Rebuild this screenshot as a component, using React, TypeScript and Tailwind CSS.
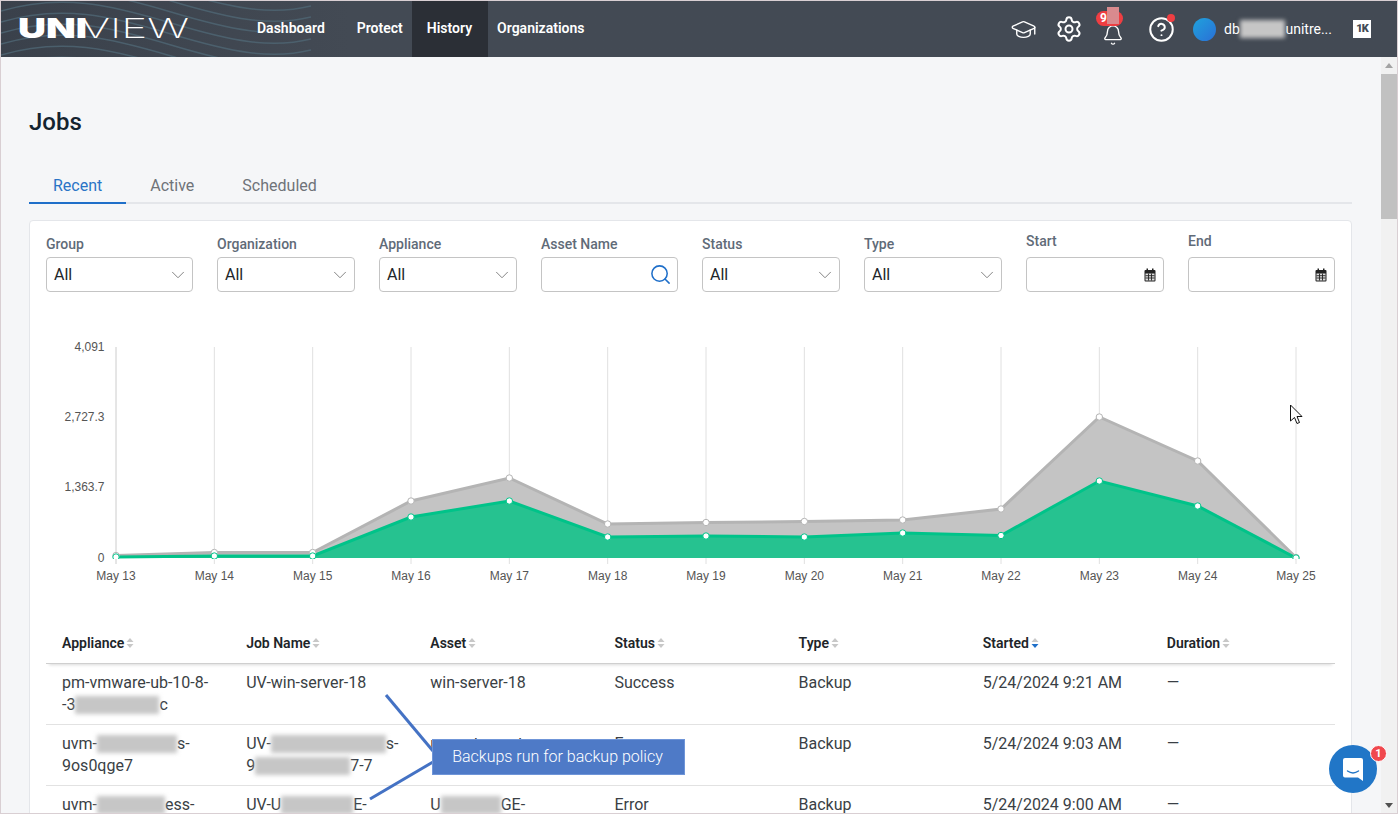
import React from "react";
import { GraduationCap, Settings, Bell, CircleHelp, Search, ChevronDown } from "lucide-react";

const xs = Array.from({ length: 13 }, (_, i) => 116 + (1180 / 12) * i);
const labels = ["May 13","May 14","May 15","May 16","May 17","May 18","May 19","May 20","May 21","May 22","May 23","May 24","May 25"];
const gray = [555.5,552.5,552.5,501,478,524,522.5,521.5,520,509,417,461,557.5];
const green = [557,556,556,517,501,537,536,537,533,535.5,481,506,558];

function pts(a: number[]) { return a.map((y, i) => `${xs[i]},${y}`).join(" "); }
function area(a: number[]) { return `116,558 ${pts(a)} 1296,558`; }

function Chart() {
  return (
    <svg width="1289" height="260" viewBox="46 330 1289 260" className="block">
      <defs>
        <clipPath id="plot"><rect x="100" y="340" width="1210" height="219" /></clipPath>
      </defs>
      {xs.map((x, i) => (
        <line key={x} x1={x} x2={x} y1={347} y2={564} stroke={i === 0 ? "#cccccc" : "#e0e0e0"} strokeWidth="1" />
      ))}
      {[["4,091",347],["2,727.3",417],["1,363.7",487],["0",558]].map(([t, y]) => (
        <text key={t as string} x={104.5} y={(y as number) + 4} textAnchor="end" fontSize="12" fill="#555555" fontFamily="Liberation Sans, sans-serif">{t}</text>
      ))}
      {labels.map((t, i) => (
        <text key={t} x={xs[i]} y={580} textAnchor="middle" fontSize="12" fill="#555555" fontFamily="Liberation Sans, sans-serif">{t}</text>
      ))}
      <polygon points={area(gray)} fill="#c4c4c4" />
      <polyline points={pts(gray)} fill="none" stroke="#b4b4b4" strokeWidth="3" />
      <polygon points={area(green)} fill="#26c290" />
      <polyline points={pts(green)} fill="none" stroke="#00c389" strokeWidth="3" />
      <g clipPath="url(#plot)">
        {gray.map((y, i) => <circle key={i} cx={xs[i]} cy={y} r="3.2" fill="#fff" stroke="#b4b4b4" strokeWidth="1" />)}
        {green.map((y, i) => <circle key={i} cx={xs[i]} cy={y} r="3.2" fill="#fff" stroke="#00c389" strokeWidth="1" />)}
      </g>
    </svg>
  );
}

function Blur({ w }: { w: number }) {
  return <span style={{ width: w }} className="inline-block h-[18px] align-[-4px] bg-[#c6c6c6] blur-[2px]" />;
}

function Sel({ label, w }: { label: string; w: string }) {
  return (
    <div className={w}>
      <div className="text-[14px] leading-[16px] font-medium text-[#5f6b78] mb-[5px]">{label}</div>
      <div className="h-[35px] border border-[#c4c4c4] rounded-[4px] bg-white flex items-center justify-between pl-[7px] pr-[3px]">
        <span className="text-[16px] text-[#212529]">All</span>
        <ChevronDown className="w-[22px] h-[22px] text-[#7a7a7a]" strokeWidth={1} />
      </div>
    </div>
  );
}

function CalIcon() {
  return (
    <svg width="12" height="14" viewBox="0 0 12 14">
      <rect x="2.5" y="0.5" width="1.5" height="3" fill="#222" />
      <rect x="8" y="0.5" width="1.5" height="3" fill="#222" />
      <rect x="0.5" y="2" width="11" height="11.5" rx="1" fill="#222" />
      <path d="M1.5 5.5h9v7h-9z" fill="#ddd" />
      <path d="M1.5 7.7h9M1.5 10h9M4.5 5.5v7M7.5 5.5v7" stroke="#222" strokeWidth="0.9" />
    </svg>
  );
}

function DateBox({ label, w }: { label: string; w: string }) {
  return (
    <div className={w}>
      <div className="text-[14px] leading-[16px] font-medium text-[#5f6b78] mb-[8px]">{label}</div>
      <div className="h-[35px] border border-[#c4c4c4] rounded-[4px] bg-white flex items-center justify-end pr-[7px]">
        <CalIcon />
      </div>
    </div>
  );
}

function Sort({ active }: { active?: boolean }) {
  return (
    <svg width="8" height="12" viewBox="0 0 8 12" className="ml-[2px]">
      <path d="M4 1l3.5 4h-7z" fill="#c8c8c8" />
      <path d="M4 11L.5 7h7z" fill={active ? "#1f6fc9" : "#c8c8c8"} />
    </svg>
  );
}

const heads = ["Appliance", "Job Name", "Asset", "Status", "Type", "Started", "Duration"];

function Row({ cells, border = true }: { cells: React.ReactNode[]; border?: boolean }) {
  return (
    <div className={`grid grid-cols-7 h-[61px] ${border ? "border-b border-[#e2e2e2]" : ""}`}>
      {cells.map((c, i) => (
        <div key={i} className="pl-[16px] pr-[8px] pt-[8px] text-[16px] leading-[22px] text-[#3a3f45]">{c}</div>
      ))}
    </div>
  );
}

function Waves() {
  const lines = Array.from({ length: 11 }, (_, i) => i);
  return (
    <svg className="absolute left-0 top-0 pointer-events-none" width="310" height="56" viewBox="0 0 310 56">
      {lines.map((i) => (
        <path key={i} d={`M0 ${i * 11 - 34} C 60 ${i * 11 - 52}, 110 ${i * 11 - 40}, 170 ${i * 11 - 22} S 270 ${i * 11 + 4}, 310 ${i * 11 - 6}`} fill="none" stroke="#4f6674" strokeWidth="1.5" opacity="0.8" />
      ))}
    </svg>
  );
}

export default function App() {
  const font = { fontFamily: "Roboto, sans-serif" };
  return (
    <div style={font} className="relative w-[1398px] h-[814px] overflow-hidden border border-[#d9cfd3] bg-[#f5f6f8] flex flex-col">
      <header className="relative h-[56px] shrink-0 bg-gradient-to-r from-[#3a414b] to-[#434a54] to-[25%] flex items-center text-white">
        <Waves />
        <svg width="180" height="30" viewBox="0 0 180 30" className="absolute left-[17px] top-[13px]">
          <text x="0" y="24" fontFamily="Inter, sans-serif" fontWeight="900" fontSize="27" fill="#fff" textLength="69" lengthAdjust="spacingAndGlyphs">UNI</text>
          <text x="63" y="24" fontFamily="Inter, sans-serif" fontWeight="200" fontSize="27" fill="#fff" textLength="108" lengthAdjust="spacingAndGlyphs">VIEW</text>
        </svg>
        <nav className="relative flex items-center h-full ml-[256px] text-[14px] font-semibold pb-[2px]">
          <span>Dashboard</span>
          <span className="ml-[32px]">Protect</span>
          <span className="ml-[9px] h-[56px] mb-[-2px] pl-[15px] pr-[16px] pb-[2px] bg-[#2b2f36] flex items-center">History</span>
          <span className="ml-[9px]">Organizations</span>
        </nav>
        <div className="relative ml-auto flex items-center h-full pr-[26px]">
          <GraduationCap className="w-[27px] h-[27px]" strokeWidth={1.25} />
          <Settings className="w-[28px] h-[28px] ml-[18px]" strokeWidth={1.7} />
          <div className="relative ml-[17px] w-[26px] h-[26px]">
            <Bell className="w-[22px] h-[22px] mt-[8px] ml-[2px]" strokeWidth={1.5} />
            <span className="absolute left-[-4px] top-[-5px] w-[27px] h-[15px] rounded-full bg-[#ef3e42] text-[12px] leading-[15px] font-bold pl-[4px]">9</span>
            <span className="absolute left-[7px] top-[-9px] w-[12px] h-[17px] bg-[#d98a8e] blur-[0.5px]" />
          </div>
          <div className="relative ml-[22px]">
            <CircleHelp className="w-[27px] h-[27px]" strokeWidth={1.75} />
            <span className="absolute right-[0px] top-[-2px] w-[8px] h-[8px] rounded-full bg-[#ef3e42]" />
          </div>
          <span className="ml-[18px] w-[23px] h-[23px] rounded-full bg-gradient-to-br from-[#1fa2dc] to-[#2a6fd6]" />
          <span className="ml-[8px] w-[108px] text-[14px] whitespace-nowrap font-normal flex items-center">
            db<Blur w={50} />unitre...
          </span>
          <span className="ml-[21px] w-[18px] h-[18px] bg-white text-[#434a54] text-[11px] font-black leading-[18px] text-center tracking-[-1px]">1K</span>
        </div>
      </header>

      <div className="flex flex-1 min-h-0">
        <main className="flex-1 min-w-0 pl-[28px] pr-[29px] overflow-hidden">
          <h1 className="mt-[50px] text-[24px] leading-[30px] font-medium text-[#14232f]">Jobs</h1>
          <div className="mt-[31px] flex border-b-2 border-[#e4e6ea] h-[36px] text-[16px]">
            <div className="px-[24px] h-[36px] border-b-2 border-[#1f6fc9] text-[#2a74c6] leading-[36px]">Recent</div>
            <div className="px-[24px] text-[#6f7379] leading-[36px]">Active</div>
            <div className="px-[24px] text-[#6f7379] leading-[36px]">Scheduled</div>
          </div>
          <section className="mt-[16px] bg-white border border-[#e4e6ea] rounded-[4px] px-[16px] pt-[12px] h-[700px]">
            <div className="flex items-end gap-[24px]">
              <Sel label="Group" w="w-[147px]" />
              <Sel label="Organization" w="w-[138px]" />
              <Sel label="Appliance" w="w-[138px]" />
              <div className="w-[137px]">
                <div className="text-[14px] leading-[16px] font-medium text-[#5f6b78] mb-[5px]">Asset Name</div>
                <div className="h-[35px] border border-[#c4c4c4] rounded-[4px] bg-white flex items-center justify-end pr-[5px]">
                  <Search className="w-[23px] h-[23px] text-[#1f6fc9]" strokeWidth={1.6} />
                </div>
              </div>
              <Sel label="Status" w="w-[138px]" />
              <Sel label="Type" w="w-[138px]" />
              <DateBox label="Start" w="w-[138px]" />
              <DateBox label="End" w="w-[147px]" />
            </div>
            <div className="mt-[38px]"><Chart /></div>
            <div className="mt-[33px] w-[1289px]">
              <div className="grid grid-cols-7 h-[41px] border-b border-[#cfcfcf] shadow-[0_4px_3px_-3px_rgba(0,0,0,0.15)]">
                {heads.map((h) => (
                  <div key={h} className="pl-[16px] flex items-center text-[14px] font-semibold text-[#212529]">
                    {h}<Sort active={h === "Started"} />
                  </div>
                ))}
              </div>
              <Row cells={[
                <>pm-vmware-ub-10-8-<br />-3<Blur w={84} />c</>,
                "UV-win-server-18", "win-server-18", "Success", "Backup", "5/24/2024 9:21 AM", "—",
              ]} />
              <Row cells={[
                <>uvm-<Blur w={80} />s-<br />9os0qge7</>,
                <>UV-<Blur w={115} />s-<br />9<Blur w={95} />7-7</>,
                <>uvm-stage-stress</>, "Error", "Backup", "5/24/2024 9:03 AM", "—",
              ]} />
              <Row border={false} cells={[
                <>uvm-<Blur w={68} />ess-</>,
                <>UV-U<Blur w={72} />E-</>,
                <>U<Blur w={60} />GE-</>, "Error", "Backup", "5/24/2024 9:00 AM", "—",
              ]} />
            </div>
          </section>
        </main>
        <aside className="w-[16px] shrink-0 bg-[#f1f1f1] flex flex-col items-center justify-between relative">
          <div className="h-[16px] flex items-center justify-center">
            <span className="w-0 h-0 border-x-[4px] border-x-transparent border-b-[5px] border-b-[#a3a3a3]" />
          </div>
          <div className="absolute top-[17px] left-0 w-full h-[145px] bg-[#c1c1c1]" />
          <div className="h-[16px] flex items-center justify-center">
            <span className="w-0 h-0 border-x-[4px] border-x-transparent border-t-[5px] border-t-[#505050]" />
          </div>
        </aside>
      </div>

      <svg className="absolute left-[-1px] top-[-1px] pointer-events-none" width="1398" height="814">
        <line x1="386" y1="695" x2="433" y2="751" stroke="#4472c4" strokeWidth="3" />
        <line x1="370" y1="799" x2="433" y2="762" stroke="#4472c4" strokeWidth="3" />
      </svg>
      <div className="absolute left-[431px] top-[738px] w-[253px] h-[36px] bg-[#4e7ac7] border border-[#6f95d8] text-white text-[16px] font-light flex items-center justify-center pr-[2px]">
        Backups run for backup policy
      </div>

      <svg className="absolute left-[1288px] top-[403px]" width="14" height="22" viewBox="0 0 14 22">
        <path d="M1.5 1v16l4-3.5 2.5 6 2.5-1-2.5-6h5z" fill="#fff" stroke="#111" strokeWidth="1" />
      </svg>

      <div className="absolute left-[1328px] top-[744px] w-[48px] h-[48px] rounded-full bg-[#2176c7] flex items-center justify-center">
        <svg width="22" height="25" viewBox="0 0 22 25">
          <path d="M3 1h16a2 2 0 0 1 2 2v21l-5-3.5H3a2 2 0 0 1-2-2V3a2 2 0 0 1 2-2z" fill="#fff" />
          <path d="M5.5 14c3.5 2.5 7.5 2.5 11 0" fill="none" stroke="#2176c7" strokeWidth="1.4" strokeLinecap="round" />
        </svg>
      </div>
      <span className="absolute left-[1369px] top-[744px] w-[17px] h-[17px] rounded-full bg-[#f0484e] border border-white text-white text-[11px] leading-[15px] font-bold text-center">1</span>
    </div>
  );
}
